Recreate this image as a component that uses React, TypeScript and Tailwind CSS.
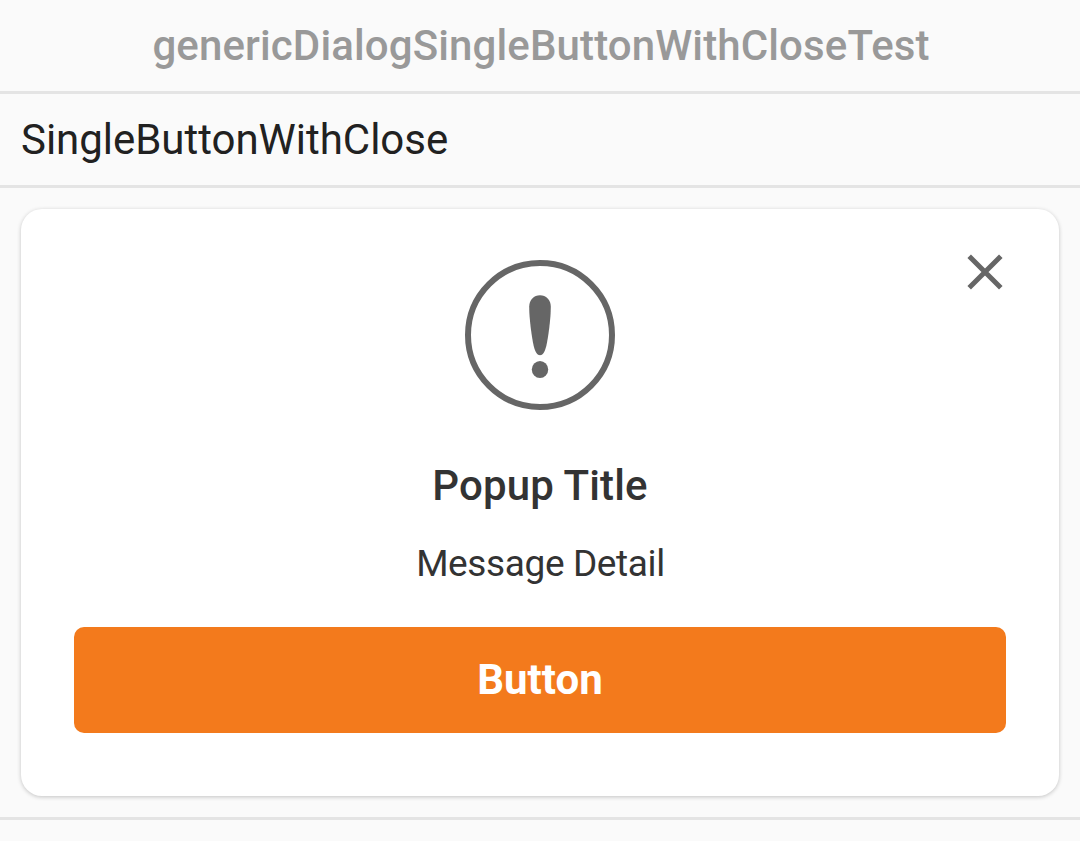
export default function App() {
  return (
    <div className="flex h-[841px] w-[1080px] flex-col bg-[#fafafa] font-['Roboto',sans-serif]">
      <header className="flex h-[91px] items-center justify-center pl-[2px] text-[42px] font-medium tracking-[0.12px] text-[#999999]">
        genericDialogSingleButtonWithCloseTest
      </header>
      <div className="h-[3px] bg-[#e4e4e4]" />
      <div className="flex h-[91px] items-center px-[21px] text-[42px] tracking-[-0.03px] text-[#212121]">SingleButtonWithClose</div>
      <div className="h-[3px] bg-[#e4e4e4]" />
      <main className="h-[629px] px-[21px] pt-[21px]">
        <section className="relative flex h-[587px] flex-col items-center rounded-[21px] bg-white px-[53px] shadow-[0_1px_4px_rgba(0,0,0,0.22)]">
          <button aria-label="Close" className="absolute top-[45px] right-[56px]">
            <svg width="36" height="36" viewBox="0 0 36 36" fill="none" stroke="#666" strokeWidth="5">
              <path d="M2.200 2.200L33.800 33.800M33.800 2.200L2.200 33.800" />
            </svg>
          </button>
          <svg className="mt-[51px]" width="150" height="150" viewBox="0 0 150 150">
            <circle cx="75" cy="75" r="72" fill="none" stroke="#666" strokeWidth="6" />
            <path fill="#666" d="M64.200 46.500C64.200 40 69 35.200 75 35.200S85.800 40 85.800 46.500C85.800 59 83.300 77 81.300 86C79.600 92.500 77.800 95.200 75 95.200S70.400 92.500 68.700 86C66.700 77 64.200 59 64.200 46.500Z" />
            <ellipse cx="75" cy="109.500" rx="8.200" ry="8.600" fill="#666" />
          </svg>
          <h1 className="mt-[51px] text-[42px] leading-[50px] font-medium tracking-[0.13px] text-[#333]">Popup Title</h1>
          <p className="mt-[31px] pl-px text-[37px] leading-[44px] tracking-[-0.38px] text-[#333]">Message Detail</p>
          <button className="mt-[41px] h-[106px] w-full rounded-[10px] bg-[#f37a1c] pb-[2px] text-[42px] font-bold text-white">Button</button>
        </section>
      </main>
      <div className="h-[3px] bg-[#e4e4e4]" />
    </div>
  );
}
